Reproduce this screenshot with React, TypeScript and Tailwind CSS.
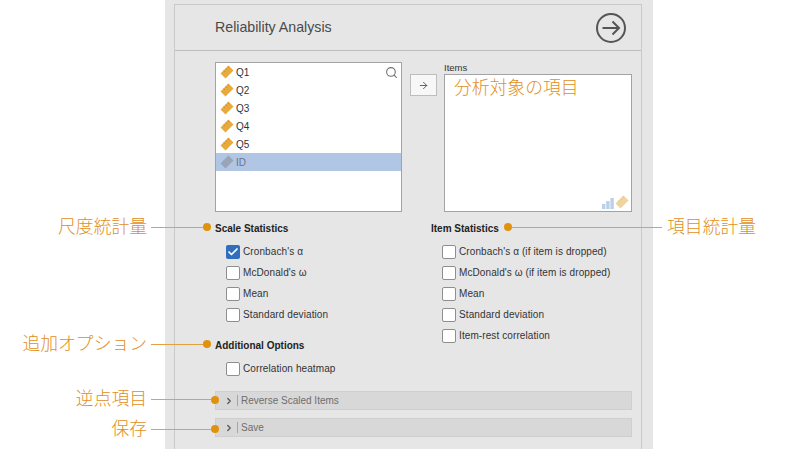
import { ArrowRight, Check, ChevronRight, Search } from 'lucide-react';

const variables = ['Q1', 'Q2', 'Q3', 'Q4', 'Q5'];
const scaleStats = ["Cronbach's α", "McDonald's ω", 'Mean', 'Standard deviation'];
const itemStats = [
  "Cronbach's α (if item is dropped)",
  "McDonald's ω (if item is dropped)",
  'Mean',
  'Standard deviation',
  'Item-rest correlation',
];

function Ruler({ color = '#e8a93f', tick = '#c98a22', size = 14 }: { color?: string; tick?: string; size?: number }) {
  return (
    <svg width={size} height={size} viewBox="0 0 14 14" className="shrink-0">
      <path d="M0.5 8.5 L8.5 0.5 L13.5 5.5 L5.5 13.5 Z" fill={color} />
      <path d="M3.5 5.5 L5 7 M5.5 3.5 L7 5 M7.5 1.5 L9 3" stroke={tick} strokeWidth="0.8" fill="none" />
    </svg>
  );
}

function CheckRow({ label, checked }: { label: string; checked?: boolean }) {
  return (
    <div className="flex h-[21px] items-center gap-[3px]">
      {checked ? (
        <span className="flex h-[14px] w-[14px] items-center justify-center rounded-[2px] bg-[#2f6fbd]">
          <Check size={12} strokeWidth={3.5} className="text-white" />
        </span>
      ) : (
        <span className="h-[14px] w-[14px] rounded-[2px] border border-[#8e8e8e] bg-white" />
      )}
      <span className="text-[10px] tracking-[0.1px] whitespace-nowrap text-[#333333]">{label}</span>
    </div>
  );
}

function Collapsed({ label }: { label: string }) {
  return (
    <div className="flex h-[19px] w-[417px] items-center border border-[#cfcfcf] bg-[#d8d8d8] pl-[8px]">
      <ChevronRight size={10} strokeWidth={3} className="text-[#555555]" />
      <span className="ml-[3px] h-[11px] w-px bg-[#a5a5a5]" />
      <span className="ml-[3px] text-[10px] text-[#6e6e6e]">{label}</span>
    </div>
  );
}

function Note({ text, top, right, lineLeft, lineWidth }: { text: string; top: number; right: number; lineLeft: number; lineWidth: number }) {
  return (
    <>
      <span
        className="absolute text-[17.8px] leading-[24px] font-light whitespace-nowrap text-[#df8f1a]"
        style={{ top: top - 12, right: 800 - right }}
      >
        {text}
      </span>
      <span className="absolute h-px bg-[#e3a142]" style={{ top, left: lineLeft, width: lineWidth }} />
    </>
  );
}

function Dot({ x, y }: { x: number; y: number }) {
  return <span className="absolute h-[8px] w-[8px] rounded-full bg-[#e0920f]" style={{ left: x - 4, top: y - 4 }} />;
}

export default function App() {
  return (
    <div className="relative flex h-[449px] w-[800px] overflow-hidden bg-white pl-[165px] font-['Liberation_Sans','Noto_Sans_CJK_JP',sans-serif]">
      <div className="h-full w-[488px] bg-[#e6e6e6] pt-[4px] pr-[11px] pl-[9px]">
        <div className="h-full border-x border-t border-[#c9c9c9]">
          <div className="flex h-[46px] items-center justify-between border-b border-[#bdbdbd] pt-[1px] pr-[14px] pl-[40px]">
            <h1 className="text-[14.2px] text-[#4a4a4a]">Reliability Analysis</h1>
            <svg width="32" height="32" viewBox="0 0 32 32" fill="none" stroke="#555555" strokeWidth="2">
              <circle cx="16" cy="16" r="14" />
              <path d="M7.5 16 H24 M17.5 9.5 L24 16 L17.5 22.5" />
            </svg>
          </div>

          <div className="pt-[11px] pl-[40px]">
            <div className="flex items-start">
              <div className="relative h-[150px] w-[187px] border border-[#a3a3a3] bg-white">
                <Search size={13} strokeWidth={2} className="absolute top-[3px] right-[3px] text-[#6f6f6f]" />
                {variables.map((v) => (
                  <div key={v} className="flex h-[18px] items-center gap-[2px] pl-[4px] text-[10px] text-[#333333]">
                    <Ruler />
                    {v}
                  </div>
                ))}
                <div className="flex h-[18px] items-center gap-[2px] bg-[#b1c6e4] pl-[4px] text-[10px] text-[#68758d]">
                  <Ruler color="#99a4b6" tick="#99a4b6" />
                  ID
                </div>
              </div>

              <button className="mt-[12px] ml-[8px] flex h-[22px] w-[27px] items-center justify-center border border-[#bdbdbd] bg-[#f7f7f7]">
                <ArrowRight size={11} strokeWidth={2} className="text-[#555555]" />
              </button>

              <div className="ml-[7px]">
                <div className="h-[12px] text-[9.5px] leading-[12px] text-[#333333]">Items</div>
                <div className="relative h-[138px] w-[188px] border border-[#a3a3a3] bg-white pt-[1px] pl-[9px] text-[17.8px] leading-[24px] font-light text-[#df8f1a]">
                  分析対象の項目
                  <div className="absolute right-[2px] bottom-[2px] flex items-end gap-[1px]">
                    <svg width="12" height="11" viewBox="0 0 12 11" fill="#bcd0ea">
                      <rect x="0" y="6" width="3.4" height="5" />
                      <rect x="4.2" y="3" width="3.4" height="8" />
                      <rect x="8.4" y="0" width="3.4" height="11" />
                    </svg>
                    <Ruler color="#efd49e" tick="#e5c485" />
                  </div>
                </div>
              </div>
            </div>

            <div className="mt-[10px] flex">
              <div className="w-[216px]">
                <h2 className="h-[14px] text-[10px] leading-[14px] font-bold text-[#222222]">Scale Statistics</h2>
                <div className="mt-[3px] pt-[2px] pl-[11px]">
                  {scaleStats.map((s, i) => (
                    <CheckRow key={s} label={s} checked={i === 0} />
                  ))}
                </div>
                <h2 className="mt-[14px] h-[14px] text-[10px] leading-[14px] font-bold text-[#222222]">Additional Options</h2>
                <div className="mt-[5px] pl-[11px]">
                  <CheckRow label="Correlation heatmap" />
                </div>
              </div>
              <div>
                <h2 className="h-[14px] text-[10px] leading-[14px] font-bold text-[#222222]">Item Statistics</h2>
                <div className="mt-[3px] pt-[2px] pl-[11px]">
                  {itemStats.map((s) => (
                    <CheckRow key={s} label={s} />
                  ))}
                </div>
              </div>
            </div>

            <div className="mt-[12px] flex flex-col gap-[8px]">
              <Collapsed label="Reverse Scaled Items" />
              <Collapsed label="Save" />
            </div>
          </div>
        </div>
      </div>

      <Note text="尺度統計量" top={227} right={147} lineLeft={151} lineWidth={54} />
      <Note text="追加オプション" top={344} right={147} lineLeft={151} lineWidth={54} />
      <Note text="逆点項目" top={399} right={147} lineLeft={151} lineWidth={62} />
      <Note text="保存" top={429} right={147} lineLeft={151} lineWidth={62} />
      <Note text="項目統計量" top={227} right={756} lineLeft={510} lineWidth={152} />
      <Dot x={207} y={227} />
      <Dot x={207} y={344} />
      <Dot x={215} y={400} />
      <Dot x={215} y={429} />
      <Dot x={508} y={227} />
    </div>
  );
}
